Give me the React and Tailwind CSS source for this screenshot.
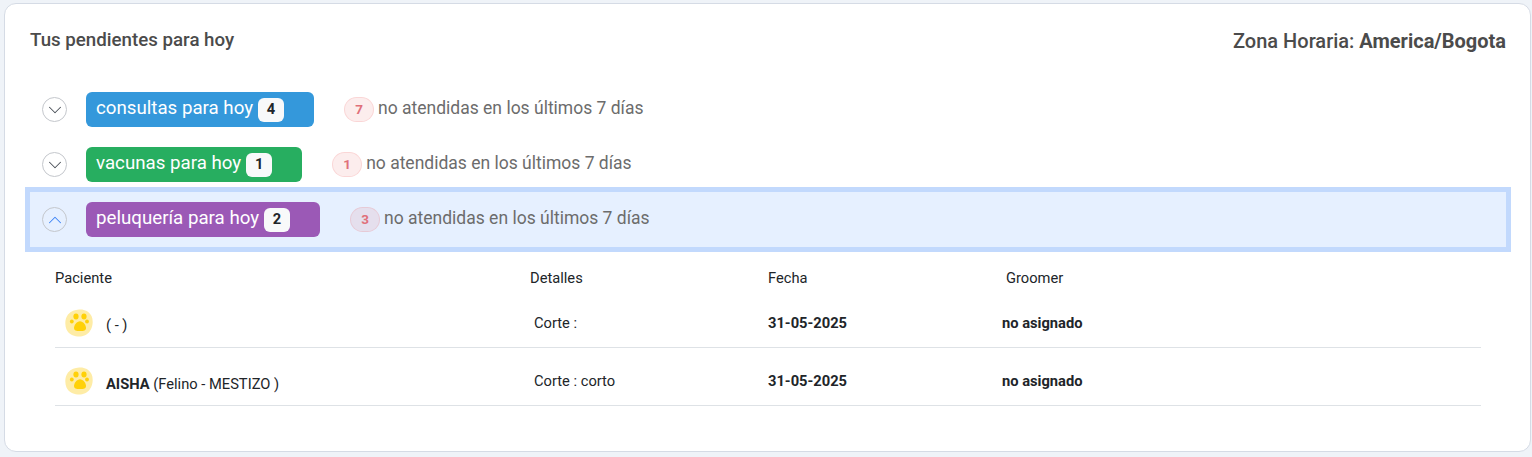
import { ChevronDown, ChevronUp } from 'lucide-react';

const GROUPS = [
  { label: 'consultas para hoy', count: 4, missed: 7, color: 'bg-[#3498db]' },
  { label: 'vacunas para hoy', count: 1, missed: 1, color: 'bg-[#27ae60]' },
  { label: 'peluquería para hoy', count: 2, missed: 3, color: 'bg-[#9b59b6]', open: true },
];

const APPOINTMENTS = [
  { name: '', info: '( - )', details: 'Corte :', date: '31-05-2025', groomer: 'no asignado' },
  { name: 'AISHA', info: ' (Felino - MESTIZO )', details: 'Corte : corto', date: '31-05-2025', groomer: 'no asignado' },
];

function PawIcon() {
  return (
    <svg width="28" height="28" viewBox="0 0 28 28" className="shrink-0">
      <path d="M14 0.5C19 0 24 2 26.5 7C28.5 11.5 28 17.5 25 22C22 26.5 17 28 12.5 27.5C8 27 3.5 25 1.5 20.5C-0.5 15.5 0 9.5 3 5.5C6 2 10 0.8 14 0.5Z" fill="#feeca6" />
      <ellipse cx="11" cy="7.5" rx="2.6" ry="3" fill="#ffd108" />
      <ellipse cx="19" cy="7.5" rx="2.6" ry="3" fill="#ffd108" />
      <circle cx="6.8" cy="12.5" r="1.9" fill="#ffd108" />
      <circle cx="22" cy="12.5" r="1.9" fill="#ffd108" />
      <path d="M15 12.2C18 12.2 21 16 21 19C21 21.6 19 22 15 22C11 22 9 21.6 9 19C9 16 12 12.2 15 12.2Z" fill="#ffd108" />
    </svg>
  );
}

function GroupRow({ group }) {
  const Chevron = group.open ? ChevronUp : ChevronDown;
  return (
    <div className={`flex items-center h-[55px] pl-3 ${group.open ? 'bg-[#e6f0ff] outline-[5px] outline-solid outline-[#c2d9fd]' : ''}`}>
      <span className="flex items-center justify-center w-[25px] h-[25px] rounded-full border border-[#c4c7cc] shrink-0">
        <Chevron size={22} strokeWidth={1.1} className={group.open ? 'text-[#3b82f6]' : 'text-[#495057]'} />
      </span>
      <span className={`flex items-center h-[35px] ml-[19px] pl-[10px] pr-[30px] rounded-md text-white text-[18.72px] ${group.color}`}>
        <span className="-mt-[3px]">{group.label}</span>
        <span className="flex items-center justify-center w-[26px] h-[24px] ml-[5px] rounded-md bg-[#f8f9fa] text-[#212529] text-[14.7px] font-bold">{group.count}</span>
      </span>
      <span className="flex items-center justify-center w-[30px] h-[25px] ml-[30px] rounded-full border border-[#ef444422] bg-[#e24c4b1a] text-[#e0707a] text-[13.5px] font-bold">{group.missed}</span>
      <span className="ml-1 -mt-[3px] text-[17.5px] text-[#6c6c6c]">no atendidas en los últimos 7 días</span>
    </div>
  );
}

export default function App() {
  return (
    <div className="h-[457px] bg-[#eff3f8] pt-[3px] pl-1 pr-[1px] font-['Roboto',sans-serif]">
      <div className="h-[449px] bg-white border border-[#d5dbe5] rounded-xl pt-[22px] px-[25px]">
        <div className="flex justify-between items-start h-[56px] text-[#4b4b4b]">
          <h2 className="text-[18.72px] font-medium leading-[28px]">Tus pendientes para hoy</h2>
          <div className="text-[20px] font-medium leading-[31px] -mr-[1px]">Zona Horaria: <b className="font-bold">America/Bogota</b></div>
        </div>

        <div className="w-[1476px]">
          {GROUPS.map((g) => <GroupRow key={g.label} group={g} />)}
        </div>

        <div className="w-[1426px] ml-[25px] mt-[20px] text-[14.7px] text-[#212529]">
          <div className="flex items-center h-[23px]">
            <div className="w-[475px]">Paciente</div>
            <div className="w-[238px]">Detalles</div>
            <div className="w-[234px]">Fecha</div>
            <div className="pl-1">Groomer</div>
          </div>
          {APPOINTMENTS.map((a, i) => (
            <div key={i} className="flex items-center h-[58px] pt-[9px] border-b border-[#dee2e6]">
              <div className="w-[475px] flex items-center gap-[13px] pl-[10px]">
                <PawIcon />
                <span className={i === 1 ? 'mt-[6px]' : 'mt-[4px]'}>
                  {a.name && <b className="font-bold">{a.name}</b>}{a.info}
                </span>
              </div>
              <div className="w-[238px] pl-1">{a.details}</div>
              <div className="w-[234px] font-bold">{a.date}</div>
              <div className="font-bold">{a.groomer}</div>
            </div>
          ))}
        </div>
      </div>
    </div>
  );
}
